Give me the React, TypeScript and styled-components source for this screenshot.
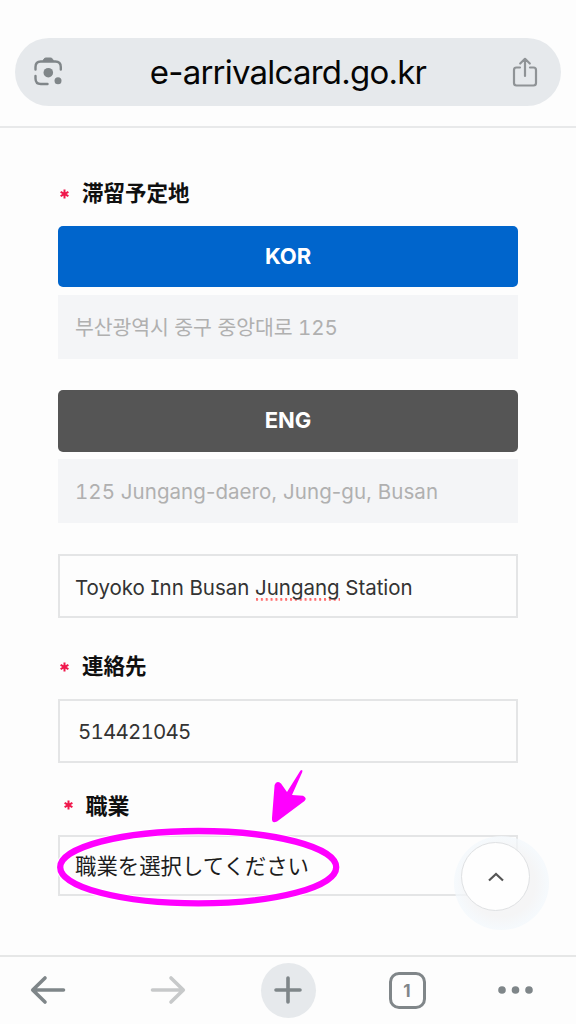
import React from "react";
import styled, { createGlobalStyle } from "styled-components";

const GlobalStyle = createGlobalStyle`
  * { box-sizing: border-box; }
  body { margin: 0; background: #fdfdfd; }
`;

const latin = `Inter, "Noto Sans CJK KR", sans-serif`;
const japanese = `"Noto Sans CJK JP", sans-serif`;

const Screen = styled.div`
  position: relative;
  display: flex;
  flex-direction: column;
  width: 576px;
  height: 1024px;
  overflow: hidden;
  background: #fdfdfd;
  font-family: ${latin};
`;

const Header = styled.header`
  height: 128px;
  padding: 38px 15px 0;
  border-bottom: 2px solid #e8e9ea;
`;

const AddressBar = styled.div`
  display: flex;
  align-items: center;
  justify-content: space-between;
  height: 68px;
  padding: 0 23px 0 17px;
  border-radius: 34px;
  background: #e6e9ec;
`;

const Url = styled.span`
  font-size: 33px;
  line-height: 40px;
  letter-spacing: -0.77px;
  color: #050505;
  white-space: nowrap;
`;

const Form = styled.main`
  flex: 1;
  display: flex;
  flex-direction: column;
  padding: 0 58px;
`;

const Label = styled.label<{ $top: number; $indent?: number; $size?: number }>`
  display: flex;
  align-items: center;
  gap: 13px;
  height: 32px;
  margin-top: ${(p) => p.$top}px;
  padding-left: ${(p) => 2 + (p.$indent ?? 0)}px;
  font: 700 ${(p) => p.$size ?? 21.5}px/32px ${japanese};
  color: #101010;
`;

const Star = styled.svg`
  display: block;
  width: 9px;
  height: 10px;
  margin-top: 3px;
`;

const LanguageButton = styled.button<{ $color: string; $top: number }>`
  height: 61.5px;
  flex: none;
  margin: ${(p) => p.$top}px 0 0;
  padding: 0 0 1px;
  border: 0;
  border-radius: 5px;
  background: ${(p) => p.$color};
  color: #fff;
  font: 700 22px/60px ${latin};
  letter-spacing: -0.1px;
`;

const Field = styled.div<{ $top: number; $filled?: boolean; $indent?: number; $height?: number }>`
  display: flex;
  align-items: center;
  flex: none;
  height: ${(p) => p.$height ?? 64}px;
  margin-top: ${(p) => p.$top}px;
  padding-left: ${(p) => (p.$indent ?? 17) - (p.$filled ? 0 : 2)}px;
  border: ${(p) => (p.$filled ? "0" : "2px solid #e4e5e6")};
  background: ${(p) => (p.$filled ? "#f4f5f7" : "#fdfdfd")};
  color: ${(p) => (p.$filled ? "#b0b0b0" : "#333")};
`;

const Value = styled.span<{ $spacing?: number; $drop?: number }>`
  padding-top: ${(p) => p.$drop ?? 3}px;
  font-size: 20.5px;
  line-height: 30px;
  letter-spacing: ${(p) => p.$spacing ?? 0}px;
  font-feature-settings: "cv08";
  white-space: pre;
`;

const Digits = styled.span`
  font-feature-settings: "tnum";
`;

const Misspelled = styled.span`
  padding-bottom: 1px;
  background: radial-gradient(circle at 2px 1px, #ff6f6f 1.1px, transparent 1.5px) left bottom / 4.86px 2.5px repeat-x;
`;

const SelectValue = styled.span`
  padding-bottom: 2px;
  font: 400 21.4px/30px ${japanese};
  color: #1c1c1c;
`;

const Annotation = styled.svg`
  position: absolute;
  left: 50px;
  top: 765px;
  pointer-events: none;
`;

const ScrollHalo = styled.div`
  position: absolute;
  left: 454px;
  top: 836px;
  width: 95px;
  height: 94px;
  border-radius: 50%;
  background: radial-gradient(circle at 50% 50%, rgba(243, 243, 244, 0.8) 0 50%, rgba(243, 248, 252, 0.75) 68%);
`;

const ScrollTop = styled.button`
  position: absolute;
  left: 461px;
  top: 842px;
  display: flex;
  align-items: center;
  justify-content: center;
  width: 69px;
  height: 69px;
  padding: 0;
  border: 1.5px solid #dfe1e3;
  border-radius: 50%;
  background: #fefefe;
`;

const Footer = styled.footer`
  display: grid;
  grid-template-columns: 96px 144px 96px 143px 73px;
  align-items: center;
  justify-items: center;
  height: 69px;
  padding-bottom: 1px;
  border-top: 2px solid #e6e7e7;
`;

const NewTab = styled.div`
  display: flex;
  align-items: center;
  justify-content: center;
  width: 55px;
  height: 55px;
  border-radius: 50%;
  background: #e6e9ec;
`;

const TabCount = styled.div`
  display: flex;
  align-items: center;
  justify-content: center;
  width: 37px;
  height: 37px;
  padding: 1px 1px 0 0;
  border: 3px solid #808689;
  border-radius: 10px;
  color: #808689;
  font: 700 17px/30px Inter, sans-serif;
`;

const Required = () => (
  <Star viewBox="0 0 9 10" stroke="#f0184c" strokeWidth="2" fill="none">
    <path d="M4.5 .5v9M.6 2.8l7.8 4.4M8.4 2.8L.6 7.2" />
  </Star>
);

const LensIcon = () => (
  <svg width="32" height="30" viewBox="0 0 32 30" fill="none" stroke="#808689" strokeWidth="2.4" strokeLinecap="round">
    <path d="M3.500 12.500V10Q3.500 4.500 8.800 4.500H23.300Q28.800 4.500 28.800 10V12.500M3.500 19V21.500Q3.500 27 8.800 27H15.500" />
    <path d="M11.100 4L11.800 2.300Q12.500 1 13.800 1h4.800q1.400 0 2 1.300l.7 1.700z" fill="#808689" strokeWidth="1" />
    <circle cx="16.300" cy="15.700" r="4.800" fill="#808689" stroke="none" />
    <circle cx="26" cy="23.700" r="3.500" fill="#808689" stroke="none" />
  </svg>
);

const ShareIcon = () => (
  <svg width="26" height="30" viewBox="0 0 26 30" fill="none" stroke="#8f9396" strokeWidth="2.2" strokeLinecap="round" strokeLinejoin="round">
    <path d="M8 10.500H4.500Q2 10.500 2 13V26Q2 28.500 4.500 28.500H21.500Q24 28.500 24 26V13Q24 10.500 21.500 10.500H18M13 19V2M8.200 6.500L13 1.800L17.800 6.500" />
  </svg>
);

const ArrowIcon = ({ forward }: { forward?: boolean }) => (
  <svg width="36" height="30" viewBox="0 0 36 30" fill="none" stroke={forward ? "#c7c9ca" : "#7f8689"} strokeWidth="3.6" strokeLinecap="round" strokeLinejoin="round">
    <path d={forward ? "M2.500 15H33M21 3L33.300 15L21 27" : "M33.500 15H3M15 3L2.700 15L15 27"} />
  </svg>
);

export default function App() {
  return (
    <Screen>
      <GlobalStyle />
      <Header>
        <AddressBar>
          <LensIcon />
          <Url>e-arrivalcard.go.kr</Url>
          <ShareIcon />
        </AddressBar>
      </Header>
      <Form>
        <Label $top={48}><Required />滞留予定地</Label>
        <LanguageButton $top={17.500} $color="#0065cc">KOR</LanguageButton>
        <Field $top={8} $filled><Value $spacing={-0.12} $drop={2}>부산광역시 중구 중앙대로 <Digits>125</Digits></Value></Field>
        <LanguageButton $top={31} $color="#555">ENG</LanguageButton>
        <Field $top={7.500} $filled>
          <Value $spacing={0.05} $drop={2}><Digits>125</Digits> Jungang-daero, Jung-gu, Busan</Value>
        </Field>
        <Field $top={31}>
          <Value $spacing={-0.03}>Toyoko Inn Busan <Misspelled>Jungang</Misspelled> Station</Value>
        </Field>
        <Label $top={31}><Required />連絡先</Label>
        <Field $top={17.500} $indent={20}><Value $spacing={-0.8}><Digits>514421045</Digits></Value></Field>
        <Label $top={25} $indent={3.500} $size={22}><Required />職業</Label>
        <Field $top={15.500} $height={61}><SelectValue>職業を選択してください</SelectValue></Field>
      </Form>
      <ScrollHalo />
      <ScrollTop aria-label="Top">
        <svg width="18" height="12" viewBox="0 0 18 12" fill="none" stroke="#555" strokeWidth="2.200">
          <path d="M2 9.500L9 3L16 9.500" />
        </svg>
      </ScrollTop>
      <Annotation width="300" height="150" viewBox="50 765 300 150">
        <ellipse cx="198.200" cy="867.200" rx="138" ry="36.200" fill="none" stroke="#fff" strokeWidth="8.500" />
        <ellipse cx="198.200" cy="867.200" rx="138" ry="36.200" fill="none" stroke="#f0f" strokeWidth="6.300" />
        <path d="M300.500 770.500Q303 769 302.300 772L292 795L303 795.700Q307.500 798 304.500 801L277 821.500Q271.500 824 272 818L274.600 785Q276.500 780 281 783.500L287 792Z" fill="#f0f" />
      </Annotation>
      <Footer>
        <ArrowIcon />
        <ArrowIcon forward />
        <NewTab>
          <svg width="28" height="28" viewBox="0 0 28 28" stroke="#7f8689" strokeWidth="3.600" strokeLinecap="round">
            <path d="M2 14H26M14 2V26" />
          </svg>
        </NewTab>
        <TabCount>1</TabCount>
        <svg width="36" height="8" viewBox="0 0 36 8" fill="#7f8689">
          <circle cx="4" cy="4" r="3.800" />
          <circle cx="17.500" cy="4" r="3.800" />
          <circle cx="31" cy="4" r="3.800" />
        </svg>
      </Footer>
    </Screen>
  );
}
